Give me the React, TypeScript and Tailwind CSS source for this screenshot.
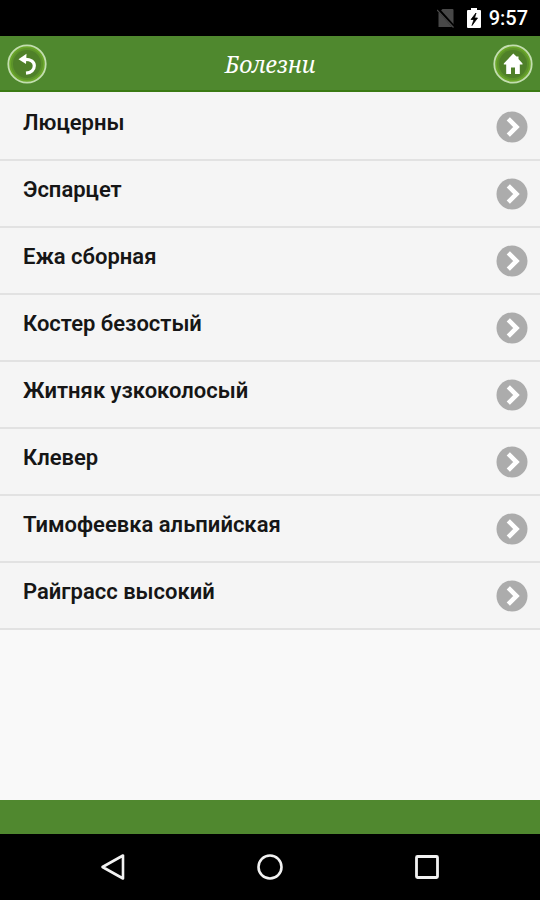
import React from 'react';

const diseases = [
  'Люцерны',
  'Эспарцет',
  'Ежа сборная',
  'Костер безостый',
  'Житняк узкоколосый',
  'Клевер',
  'Тимофеевка альпийская',
  'Райграсс высокий',
];

const StatusBar: React.FC = () => (
  <div className="flex h-9 items-center justify-end bg-black pr-3">
    <svg width="18" height="20" viewBox="0 0 18 20" className="mr-3">
      <path d="M5.500 1h10a1 1 0 0 1 1 1v17H1.500V5z" fill="#484848" />
      <path d="M0 0l18 20" stroke="#000" strokeWidth="3" />
      <path d="M0 2l16.500 17.500" stroke="#4a4a4a" strokeWidth="1.200" />
    </svg>
    <svg width="14" height="22" viewBox="0 0 14 22" className="mr-2">
      <path d="M1 3h3V1h6v2h3a1 1 0 0 1 1 1v16a1 1 0 0 1-1 1H1a1 1 0 0 1-1-1V4a1 1 0 0 1 1-1z" fill="#fff" />
      <path d="M9 6L4 12.500h3L5 18.500 10.500 11h-3z" fill="#000" stroke="#000" strokeWidth="0.800" />
    </svg>
    <span className="text-xl font-medium text-white">9:57</span>
  </div>
);

const RoundIcon: React.FC<{ children: React.ReactNode }> = ({ children }) => (
  <svg width="40" height="40" viewBox="0 0 40 40" className="block">
    <circle cx="20" cy="20" r="18.500" fill="#6ba62b" />
    <circle cx="20" cy="20" r="16" fill="#5c932a" />
    <circle cx="20" cy="20" r="14" fill="#4f8029" />
    <circle cx="20" cy="20" r="18.700" fill="none" stroke="#c3deb0" strokeWidth="1.800" />
    {children}
  </svg>
);

const Header: React.FC = () => (
  <header className="flex h-14 items-center justify-between bg-[#4f882e] px-[7px] shadow-[inset_0_-2px_0_#3a7a14]">
    <button aria-label="Назад" className="rounded-full">
      <RoundIcon>
        <path d="M11.500 15.300l8-5.500-0.500 10.200z" fill="#fff" />
        <path d="M17 15.500c6.500-0.500 10.300 2 10.300 6.300 0 3.900-3 6.900-8.300 7.400" fill="none" stroke="#fff" strokeWidth="3.200" />
      </RoundIcon>
    </button>
    <h1 className="font-['Noto_Serif','Droid_Serif','DejaVu_Serif_Condensed','DejaVu_Serif',serif] text-[23px] italic text-white">
      Болезни
    </h1>
    <a href="#home" aria-label="Главная" className="rounded-full">
      <RoundIcon>
        <path d="M20.300 9.500L10.800 19.500v1h2.400v9.500h4.800v-6.500h4v6.500h4.800v-9.500h2.700v-1L25.500 15v-2.500h-2z" fill="#fff" />
      </RoundIcon>
    </a>
  </header>
);

const DiseaseRow: React.FC<{ name: string }> = ({ name }) => (
  <li className="border-b-2 border-[#e2e2e2]">
    <a href="#disease" className="flex h-[65px] items-center justify-between pl-[23px] pr-3">
      <span className="pb-2 text-[22px] font-semibold leading-7 text-[#161616]">{name}</span>
      <svg width="32" height="32" viewBox="0 0 32 32">
        <circle cx="16" cy="16" r="15.500" fill="#acacac" />
        <path d="M12.300 7.800l8.200 8.200-8.200 8.200" fill="none" stroke="#fff" strokeWidth="4.600" />
      </svg>
    </a>
  </li>
);

const NavBar: React.FC = () => (
  <nav className="grid h-[66px] grid-cols-3 items-center bg-black px-[34px]">
    <button aria-label="Back" className="flex justify-center">
      <svg width="28" height="28" viewBox="0 0 28 28" fill="none" stroke="#f2f2f2" strokeWidth="2.600">
        <path d="M24 2.500v23L3.500 14z" strokeLinejoin="round" />
      </svg>
    </button>
    <button aria-label="Home" className="flex justify-center">
      <svg width="28" height="28" viewBox="0 0 28 28" fill="none" stroke="#f2f2f2" strokeWidth="2.600">
        <circle cx="14" cy="14" r="11.500" />
      </svg>
    </button>
    <button aria-label="Recents" className="flex justify-center">
      <svg width="28" height="28" viewBox="0 0 28 28" fill="none" stroke="#f2f2f2" strokeWidth="2.800">
        <rect x="3.500" y="3.500" width="21" height="21" rx="1" />
      </svg>
    </button>
  </nav>
);

export default function App() {
  return (
    <div className="flex min-h-screen flex-col bg-[#f9f9f9] font-[Roboto,sans-serif]">
      <StatusBar />
      <Header />
      <main className="flex-1">
        <ul className="bg-[#f5f5f5] pt-[2px]">
          {diseases.map((name) => (
            <DiseaseRow key={name} name={name} />
          ))}
        </ul>
      </main>
      <footer className="h-[34px] bg-[#50882f]" />
      <NavBar />
    </div>
  );
}
